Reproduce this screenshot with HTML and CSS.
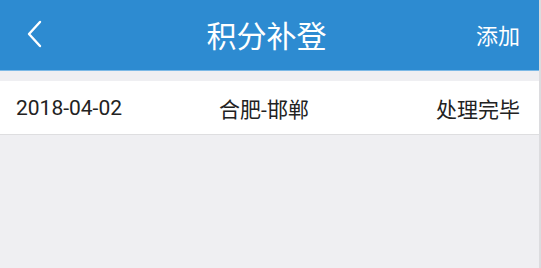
FILE: index.html
```html
<!DOCTYPE html>
<html lang="zh-CN">

<head>
    <meta charset="UTF-8" />
    <title>积分补登</title>
    <link rel="stylesheet" href="styles.css">
</head>

<body>
    <header class="header">
        <a class="back" href="#">
            <svg width="18" height="28" viewBox="0 0 18 28">
                <path d="M15 2 L4 14 L15 26" fill="none" stroke="#fff" stroke-width="2.4" stroke-linecap="round" stroke-linejoin="round" />
            </svg>
        </a>
        <h1 class="title">积分补登</h1>
        <a class="add" href="#">添加</a>
    </header>

    <ul class="list">
        <li class="item">
            <span class="date">2018-04-02</span>
            <span class="route">合肥-邯郸</span>
            <span class="status">处理完毕</span>
        </li>
    </ul>
</body>

</html>
```

FILE: styles.css
```css
* {
    margin: 0;
    padding: 0;
    box-sizing: border-box;
}

body {
    width: 100%;
    height: 268px;
    background: #efeff2;
    font-family: Roboto, "Noto Sans CJK SC", sans-serif;
    overflow: hidden;
    border-right: 2px solid #dcdcdf;
}

.header {
    height: 71px;
    background: #2d8bd1;
    border-bottom: 1px solid #7cb9e6;
    display: flex;
    align-items: center;
    justify-content: space-between;
    padding: 0 19px 0 25px;
    position: relative;
}

.back {
    display: block;
    width: 18px;
    height: 28px;
    margin-top: -2px;
}

.back svg {
    display: block;
}

.title {
    position: absolute;
    left: 0;
    right: 6px;
    text-align: center;
    font-size: 30px;
    font-weight: normal;
    color: #fff;
    pointer-events: none;
    margin-top: -2px;
}

.add {
    font-size: 22px;
    color: #fff;
    text-decoration: none;
    margin-top: -2px;
}

.list {
    margin-top: 10px;
    list-style: none;
    background: #fff;
    border-bottom: 1px solid #dedee0;
}

.item {
    height: 53px;
    display: grid;
    grid-template-columns: 1fr auto 1fr;
    align-items: center;
    padding: 0 19px 0 16px;
    font-size: 21px;
    color: #222;
}

.route {
    text-align: center;
    margin-left: -8px;
}

.status {
    text-align: right;
}
```
